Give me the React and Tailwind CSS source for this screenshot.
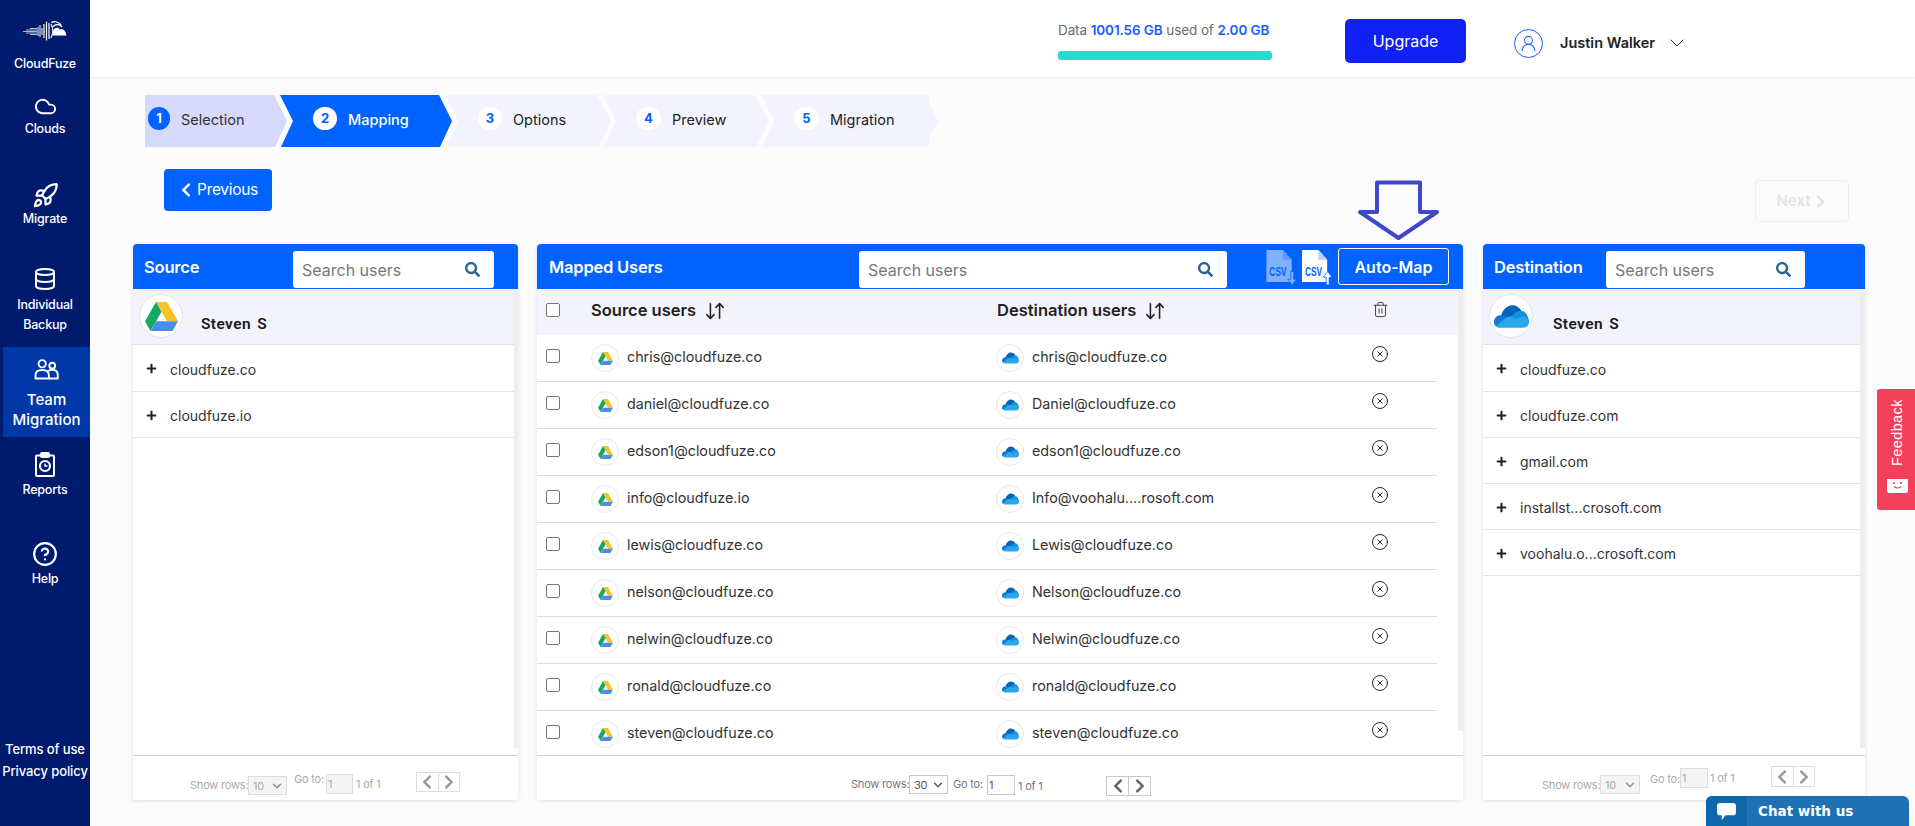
import React from "react";
import { FaSearch, FaPlus, FaChevronLeft, FaChevronRight, FaChevronDown } from "react-icons/fa";
import { Cloud, Rocket, Database, CircleHelp, ArrowDownUp, Trash2, CircleX, ChevronDown, UserRound } from "lucide-react";

function Drive({ className }) {
  return (
    <svg viewBox="0 0 24 21" className={className}>
      <path d="M8 0H16L24 14H16Z" fill="#F7C325" />
      <path d="M8 0L12 7L4 21L0 14Z" fill="#16A765" />
      <path d="M4.2 21L8 14H24L20 21Z" fill="#4C8BF0" />
    </svg>
  );
}

function OneDrive({ className }) {
  return (
    <svg viewBox="0 0 34 22" className={className}>
      <path d="M7 10C8.5 4 13 0 18 0C21.5 0 24.5 1.8 26.5 5.5L20 15Z" fill="#0364B8" />
      <path d="M7 9.5C3 9.5 0 12.5 0 16.5C0 18 .6 19.5 1.8 20.5L17 14Z" fill="#0F78D4" />
      <path d="M26.5 5.5C23 5.5 20.5 7 18.5 9.5L11 14L27 20L34 16C33.5 10 30.5 6 26.5 5.5Z" fill="#1490DF" />
      <path d="M6 22H28C31.5 22 34 19.5 34 16.5C34 13.5 31 11 28 11C25.5 11 23.5 12 21.5 13.5L17 11.5C14.5 10.5 12.5 11.5 10.5 13L1.8 20.5C3 21.5 4.5 22 6 22Z" fill="#28A8EA" />
    </svg>
  );
}

function Logo() {
  return (
    <svg viewBox="0 0 44 20" className="w-[44px] h-[20px]" fill="none" stroke="white">
      <path d="M0 10.5H14M3 9H14M3 12H14M7 7.5H14M7 13.5H14" strokeWidth=".7" />
      <path d="M15 6V15M17 4V16M19 7V14" strokeWidth="1" />
      <path d="M21 3V17M23.5 0.5V19.5M26 2V18" strokeWidth="1.2" />
      <path d="M28 3C30 7 30 13 28 17" strokeWidth="1.2" />
      <path d="M28.5 1.5C32 0 36 1 38 4M29.5 6C33 2.5 37 3 39 6" strokeWidth="1.4" />
      <path d="M30 14.5V10C31 7 35 5.5 37 8.5C40 7.5 42.5 9 43.5 14.5Z" fill="white" stroke="none" />
    </svg>
  );
}

function Team() {
  return (
    <svg viewBox="0 0 26 22" className="w-[25px] h-[21px]" fill="none" stroke="white" strokeWidth="2">
      <circle cx="8.5" cy="5" r="3.8" />
      <circle cx="19" cy="7" r="3" />
      <path d="M1.5 20.5V17C1.5 13.5 4 11.5 8.5 11.5C13 11.5 15.5 13.5 15.5 17V20.5Z" strokeLinejoin="round" />
      <path d="M15 12.5C16 11.5 17.5 11.2 19 11.2C22.5 11.2 24.8 13 24.8 16.5V20.5H15.5" strokeLinejoin="round" />
    </svg>
  );
}

function Report() {
  return (
    <svg viewBox="0 0 20 25" className="w-[20px] h-[25px]" fill="none" stroke="white" strokeWidth="2">
      <rect x="1" y="3.5" width="18" height="20.5" rx="1" />
      <rect x="6" y="1" width="8" height="4" rx="1" fill="white" />
      <circle cx="10" cy="14" r="5" strokeWidth="2.2" />
      <path d="M10 11.5V14H12.5" strokeWidth="1.4" />
    </svg>
  );
}

function Csv({ up }) {
  return (
    <svg viewBox="0 0 33 37" className={up ? "w-[32px] h-[36px]" : "w-[33px] h-[36px] opacity-50"}>
      <path d="M1 0H18L27 10V33H1Z" fill="white" />
      <path d="M18 0V10H27" fill="#b8cfff" />
      <text transform="translate(4 27) scale(0.82 1.3)" fontSize="10.5" fontWeight="700" fill="#0062FF" fontFamily="Liberation Sans, sans-serif">CSV</text>
      {up ? (
        <path d="M26 36V28H23L27.5 22L32 28H29V36Z" fill="white" stroke="#0062FF" strokeWidth=".8" />
      ) : (
        <path d="M26 22V30H23L27.5 36L32 30H29V22Z" fill="white" stroke="#0062FF" strokeWidth=".8" />
      )}
    </svg>
  );
}

function SideItem({ box, icon, labels, labelBox, gap }) {
  return (
    <div className={"flex flex-col items-center text-white " + box}>
      {icon}
      <div className={"flex flex-col items-center " + gap}>
        {labels.map((l) => (
          <div key={l} className={labelBox}>{l}</div>
        ))}
      </div>
    </div>
  );
}

function Sidebar() {
  const lbl = "text-[12.5px] leading-[20px] font-medium tracking-[-0.2px] whitespace-nowrap";
  return (
    <aside className="w-[90px] shrink-0 h-full bg-[#001A6E] flex flex-col">
      <SideItem box="h-[77px] pt-[21px]" icon={<Logo />} labels={["CloudFuze"]} labelBox={lbl} gap="mt-[13px]" />
      <SideItem box="h-[90px] pt-[18px]" icon={<Cloud size={27} strokeWidth={2} className="h-[23px]" />} labels={["Clouds"]} labelBox={lbl} gap="mt-[1px]" />
      <SideItem box="h-[90px] pt-[15px]" icon={<Rocket size={27} strokeWidth={2} />} labels={["Migrate"]} labelBox={lbl} gap="mt-[0px]" />
      <SideItem box="h-[90px] pt-[10px]" icon={<Database size={24} strokeWidth={2} />} labels={["Individual", "Backup"]} labelBox={lbl} gap="mt-[4px]" />
      <SideItem box="h-[90px] pt-[12px] ml-[3px] bg-[#0038A8]" icon={<Team />} labels={["Team", "Migration"]} labelBox="text-[15px] leading-[20px] font-medium whitespace-nowrap" gap="mt-[10px]" />
      <SideItem box="h-[90px] pt-[15px]" icon={<Report />} labels={["Reports"]} labelBox={lbl} gap="mt-[3px]" />
      <SideItem box="h-[90px] pt-[14px]" icon={<CircleHelp size={26} strokeWidth={2} />} labels={["Help"]} labelBox={lbl} gap="mt-[2px]" />
      <div className="mt-[121px] flex flex-col items-center text-white text-[13px] leading-[22px] tracking-[-0.1px] font-medium whitespace-nowrap">
        <div>Terms of use</div>
        <div>Privacy policy</div>
      </div>
    </aside>
  );
}

function Header() {
  return (
    <header className="h-[77px] bg-white shadow-[0_1px_3px_rgba(0,0,0,0.08)] flex items-start justify-end pr-[226px] shrink-0 relative">
      <div className="w-[214px] mt-[21px]">
        <div className="text-[13.5px] leading-[18px] tracking-[-0.1px] text-[#6b6b6b] whitespace-nowrap">
          Data <span className="text-[#1A5CFF] font-semibold">1001.56 GB</span> used of <span className="text-[#1A5CFF] font-semibold">2.00 GB</span>
        </div>
        <div className="h-[9px] mt-[12px] rounded-[3px] bg-[#22DDD0]" />
      </div>
      <button className="ml-[73px] mt-[19px] w-[121px] h-[44px] rounded-[5px] bg-[#1320F5] text-white text-[16px]">Upgrade</button>
      <div className="ml-[48px] mt-[29px] w-[29px] h-[29px] rounded-full border border-[#1A5CFF] flex items-center justify-center">
        <UserRound size={19} strokeWidth={1.3} className="text-[#1A5CFF]" />
      </div>
      <div className="ml-[17px] mt-[33px] w-[110px] text-[14.5px] leading-[20px] font-semibold text-[#222] whitespace-nowrap">Justin Walker</div>
      <ChevronDown size={24} strokeWidth={1} className="mt-[31px] text-[#333] -ml-[5px] w-[24px]" />
    </header>
  );
}

const steps = [
  { n: 1, t: "Selection", box: "w-[142px] bg-[#D6D9FB] text-[#333] pl-[3px] [clip-path:polygon(0_0,129px_0,142px_50%,130px_100%,0_100%)]", c: "bg-[#0062FF] text-white w-[22px]" },
  { n: 2, t: "Mapping", box: "w-[172px] -ml-[7px] bg-[#0062FF] text-white font-medium pl-[33px] [clip-path:polygon(0_0,159px_0,172px_50%,160px_100%,1px_100%,13px_50%)]", c: "bg-white text-[#0062FF] w-[24px]" },
  { n: 3, t: "Options", box: "w-[166px] -ml-[7px] bg-[#F2F3FE] text-[#222] pl-[33px] [clip-path:polygon(0_0,152px_0,166px_50%,153px_100%,1px_100%,13px_50%)]", c: "bg-white text-[#0062FF] w-[24px]" },
  { n: 4, t: "Preview", box: "w-[166px] -ml-[8px] bg-[#F2F3FE] text-[#222] pl-[33px] [clip-path:polygon(0_0,152px_0,166px_50%,153px_100%,1px_100%,13px_50%)]", c: "bg-white text-[#0062FF] w-[25px]" },
  { n: 5, t: "Migration", box: "w-[177px] -ml-[8px] bg-[#F2F3FE] text-[#222] pl-[33px] [clip-path:polygon(0_0,168px_0,168px_15%,177px_50%,168px_85%,168px_100%,1px_100%,13px_50%)]", c: "bg-white text-[#0062FF] w-[25px]" },
];

function Stepper() {
  return (
    <div className="flex ml-[55px] mt-[18px] h-[52px]">
      {steps.map((s) => (
        <div key={s.n} className={"h-[52px] flex items-center text-[14.5px] whitespace-nowrap " + s.box}>
          <span className={"h-[23px] -mt-[5px] rounded-full flex items-center justify-center text-[13px] font-bold " + s.c}>{s.n}</span>
          <span className="-mt-[3px] ml-[11px]">{s.t}</span>
        </div>
      ))}
    </div>
  );
}

function Search({ box }) {
  return (
    <div className={"h-[37px] mt-[7px] bg-white rounded-[3px] flex items-center justify-between pl-[9px] pr-[14px] shrink-0 " + box}>
      <span className="text-[16px] leading-[24px] text-[#777]">Search users</span>
      <FaSearch size={15} className="text-[#2A6293]" />
    </div>
  );
}

function PanelHead({ children }) {
  return <div className="h-[45px] bg-[#0062FF] rounded-t-[4px] flex items-start shrink-0">{children}</div>;
}

function Title({ box, children }) {
  return <div className={"text-white text-[16.5px] font-semibold leading-[22px] mt-[12px] shrink-0 whitespace-nowrap tracking-[-0.2px] " + box}>{children}</div>;
}

function Account({ logo, box }) {
  return (
    <div className="h-[56px] bg-[#F2F3FD] border-b border-[#e3e3e3] flex items-start pl-[6px]">
      <div className="w-[44px] h-[44px] mt-[5px] rounded-full bg-white border border-[#e4e4e4] flex items-center justify-center">{logo}</div>
      <div className={"mt-[24px] font-['Roboto',sans-serif] text-[15.5px] leading-[22px] font-semibold text-[#1a1a1a] tracking-[0.4px] [word-spacing:2px] " + box}>Steven S</div>
    </div>
  );
}

function Domain({ t }) {
  return (
    <div className="h-[46px] [&:nth-child(2)]:h-[47px] border-b border-[#e6e6e6] flex items-center pl-[13px] text-[14px] text-[#333]">
      <FaPlus size={11} className="text-[#222] mr-[13px] mt-[1px]" />
      <span className="mt-[2px]">{t}</span>
    </div>
  );
}

function Pager({ wrap, show, sel, go, inp, of, btn, val, selCls, inpCls, txt, chev }) {
  const line = val === "30" ? "border-[#c8c8c8]" : "border-[#dddddd]";
  return (
    <div className={"h-[45px] border-t border-[#d0d0d0] bg-white flex items-start whitespace-nowrap text-[11px] leading-[16px] tracking-[-0.2px] shrink-0 " + wrap + " " + txt}>
      <div className={show}>Show rows:</div>
      <div className={"border flex items-center justify-between pl-[4px] pr-[4px] " + sel + " " + selCls}>
        <span>{val}</span>
        <FaChevronDown size={10} className={chev} />
      </div>
      <div className={go}>Go to:</div>
      <div className={"border flex items-center pl-[1px] " + inp + " " + inpCls}>1</div>
      <div className={of}>1 of 1</div>
      <div className={"border flex " + btn + " " + line}>
        <div className={"flex-1 flex items-center justify-center border-r " + line}><FaChevronLeft size={16} className={chev} /></div>
        <div className="flex-1 flex items-center justify-center"><FaChevronRight size={16} className={chev} /></div>
      </div>
    </div>
  );
}

const users = [
  ["chris@cloudfuze.co", "chris@cloudfuze.co"],
  ["daniel@cloudfuze.co", "Daniel@cloudfuze.co"],
  ["edson1@cloudfuze.co", "edson1@cloudfuze.co"],
  ["info@cloudfuze.io", "Info@voohalu....rosoft.com"],
  ["lewis@cloudfuze.co", "Lewis@cloudfuze.co"],
  ["nelson@cloudfuze.co", "Nelson@cloudfuze.co"],
  ["nelwin@cloudfuze.co", "Nelwin@cloudfuze.co"],
  ["ronald@cloudfuze.co", "ronald@cloudfuze.co"],
  ["steven@cloudfuze.co", "steven@cloudfuze.co"],
];

function Check() {
  return <span className="block w-[14px] h-[14px] rounded-[2px] border border-[#767676] bg-white shrink-0" />;
}

function Mini({ children }) {
  return <span className="w-[28px] h-[28px] rounded-full border border-[#e8e8e8] bg-white flex items-center justify-center shrink-0">{children}</span>;
}

function SourcePanel() {
  return (
    <section className="w-[385px] h-[556px] bg-white shadow-[0_1px_4px_rgba(0,0,0,0.12)] flex flex-col shrink-0">
      <PanelHead>
        <Title box="w-[149px] ml-[11px]">Source</Title>
        <Search box="w-[201px]" />
      </PanelHead>
      <div className="flex-1 flex min-h-0">
        <div className="flex-1">
          <Account logo={<Drive className="w-[33px] h-[29px]" />} box="ml-[18px]" />
          <Domain t="cloudfuze.co" />
          <Domain t="cloudfuze.io" />
        </div>
        <div className="w-[4px] mb-[7px] bg-[#eeeeee]" />
      </div>
      <Pager wrap="pl-[57px]" txt="text-[#aaaaaa]" val="10" chev="text-[#999999]"
        selCls="bg-[#f4f4f4] border-[#dddddd]" inpCls="bg-[#f4f4f4] border-[#dddddd]"
        show="w-[58px] mt-[21px]" sel="w-[39px] h-[19px] mt-[20px]" go="w-[32px] ml-[7px] mt-[15px]"
        inp="w-[27px] h-[20px] mt-[18px]" of="w-[23px] ml-[3px] mt-[20px]" btn="w-[44px] h-[20px] ml-[37px] mt-[16px]" />
    </section>
  );
}

function MiddlePanel() {
  return (
    <section className="w-[926px] h-[556px] bg-white shadow-[0_1px_4px_rgba(0,0,0,0.12)] flex flex-col shrink-0">
      <PanelHead>
        <Title box="w-[310px] ml-[12px]">Mapped Users</Title>
        <Search box="w-[368px]" />
        <div className="ml-[38px] mt-[6px] flex gap-[3px] shrink-0"><Csv /><Csv up /></div>
        <button className="ml-[5px] mt-[4px] w-[111px] h-[37px] border border-white rounded-[3px] text-white text-[16px] font-semibold">Auto-Map</button>
      </PanelHead>
      <div className="flex-1 flex min-h-0">
        <div className="w-[921px] overflow-hidden">
          <div className="h-[46px] bg-[#F2F3FD] flex items-center text-[16.5px] font-semibold text-[#222]">
            <div className="w-[54px] pl-[9px] -mt-[4px]"><Check /></div>
            <div className="w-[406px] flex items-center -mt-[3px]">Source users<ArrowDownUp size={22} strokeWidth={1.7} className="ml-[8px] mt-[1px]" /></div>
            <div className="w-[375px] flex items-center -mt-[3px]">Destination users<ArrowDownUp size={22} strokeWidth={1.7} className="ml-[8px] mt-[1px]" /></div>
            <Trash2 size={17} strokeWidth={1.4} className="text-[#444] -mt-[6px]" />
          </div>
          {users.map(([a, b]) => (
            <div key={a} className="h-[47px] w-[900px] border-b border-[#dcdcdc] flex items-center text-[14.3px] text-[#333]">
              <div className="w-[54px] pl-[9px] -mt-[4px]"><Check /></div>
              <div className="w-[405px] flex items-center gap-[8px]"><Mini><Drive className="w-[15px] h-[13px]" /></Mini><span className="-mt-[2px]">{a}</span></div>
              <div className="w-[376px] flex items-center gap-[8px]"><Mini><OneDrive className="w-[17px] h-[12px]" /></Mini><span className="-mt-[2px]">{b}</span></div>
              <CircleX size={18} strokeWidth={1.3} className="text-[#222] -mt-[8px] -ml-[1px]" />
            </div>
          ))}
        </div>
        <div className="w-[5px] mb-[24px] bg-[#eeeeee]" />
      </div>
      <Pager wrap="pl-[314px]" txt="text-[#777777]" val="30" chev="text-[#666666]"
        selCls="bg-white border-[#c8c8c8] text-[#555]" inpCls="bg-white border-[#c8c8c8] text-[#555]"
        show="w-[58px] mt-[20px]" sel="w-[39px] h-[19px] mt-[19px]" go="w-[34px] ml-[5px] mt-[20px]"
        inp="w-[28px] h-[20px] mt-[19px]" of="w-[23px] ml-[3px] mt-[22px]" btn="w-[45px] h-[20px] ml-[65px] mt-[20px]" />
    </section>
  );
}

function DestPanel() {
  return (
    <section className="w-[382px] h-[556px] bg-white shadow-[0_1px_4px_rgba(0,0,0,0.12)] flex flex-col shrink-0">
      <PanelHead>
        <Title box="w-[112px] ml-[11px]">Destination</Title>
        <Search box="w-[199px]" />
      </PanelHead>
      <div className="flex-1 flex min-h-0">
        <div className="flex-1">
          <Account logo={<OneDrive className="w-[35px] h-[23px]" />} box="ml-[20px]" />
          {["cloudfuze.co", "cloudfuze.com", "gmail.com", "installst...crosoft.com", "voohalu.o...crosoft.com"].map((t) => (
            <Domain key={t} t={t} />
          ))}
        </div>
        <div className="w-[5px] mb-[7px] bg-[#eeeeee]" />
      </div>
      <Pager wrap="pl-[59px]" txt="text-[#aaaaaa]" val="10" chev="text-[#999999]"
        selCls="bg-[#f4f4f4] border-[#dddddd]" inpCls="bg-[#f4f4f4] border-[#dddddd]"
        show="w-[58px] mt-[21px]" sel="w-[40px] h-[19px] mt-[19px]" go="w-[30px] ml-[10px] mt-[15px]"
        inp="w-[28px] h-[20px] mt-[12px]" of="w-[23px] ml-[2px] mt-[14px]" btn="w-[44px] h-[21px] ml-[38px] mt-[10px]" />
    </section>
  );
}

export default function App() {
  return (
    <div className="relative w-[1915px] h-[826px] overflow-hidden flex bg-[#FCFCFC] [font-family:Inter,sans-serif]">
      <Sidebar />
      <main className="flex-1 flex flex-col min-w-0">
        <Header />
        <Stepper />
        <div className="h-[97px] flex items-start justify-between pl-[74px] pr-[66px] shrink-0">
          <button className="mt-[22px] w-[108px] h-[42px] rounded-[4px] bg-[#0062FF] text-white text-[15.5px] flex items-center justify-center gap-[3px] tracking-[-0.3px]">
            <FaChevronLeft size={16} />Previous
          </button>
          <button className="mt-[33px] w-[94px] h-[42px] rounded-[4px] bg-[#FCFCFC] border border-[#f0f0f0] text-[#e4e4e4] text-[15px] font-semibold flex items-center justify-center gap-[2px]">
            Next<FaChevronRight size={15} />
          </button>
        </div>
        <div className="flex ml-[43px] gap-[19px]">
          <SourcePanel />
          <MiddlePanel />
          <div className="ml-px"><DestPanel /></div>
        </div>
      </main>

      <svg viewBox="0 0 83 61" className="absolute left-[1357px] top-[180px] w-[83px] h-[61px]" fill="none" stroke="#3F48CC" strokeWidth="4" strokeLinejoin="round">
        <path d="M20 2.5H63V32H80L41.5 58L3 32H20Z" />
      </svg>

      <div className="absolute right-0 top-[389px] w-[38px] h-[121px] bg-[#F4405A] rounded-l-[3px] flex flex-col items-center text-white [font-family:'Liberation_Sans',sans-serif]">
        <div className="[writing-mode:vertical-rl] rotate-180 text-[14.5px] tracking-[0.4px] mt-[12px] ml-[3px] h-[64px] flex items-center justify-center">Feedback</div>
        <svg viewBox="0 0 24 17" className="w-[24px] h-[17px] mt-[11px]">
          <path d="M0 0L3 3H24V15Q24 17 22 17H5Q3 17 3 15V3Z" fill="white" />
          <circle cx="10" cy="7" r="1.1" fill="#F4405A" />
          <circle cx="17" cy="7" r="1.1" fill="#F4405A" />
          <path d="M10 10.5Q13.5 13.5 17 10.5" stroke="#F4405A" strokeWidth="1.2" fill="none" />
        </svg>
      </div>

      <div className="absolute left-[1706px] top-[796px] w-[203px] h-[30px] rounded-t-[6px] overflow-hidden flex bg-[#1F71B6] text-white [font-family:'DejaVu_Sans',sans-serif]">
        <div className="w-[41px] bg-[#0E67AB] flex items-center justify-center">
          <svg viewBox="0 0 20 18" className="w-[19px] h-[17px]">
            <path d="M3 0H17Q20 0 20 3V10Q20 13 17 13H9L5 18V13H3Q0 13 0 10V3Q0 0 3 0Z" fill="white" />
          </svg>
        </div>
        <div className="ml-[11px] text-[13.5px] font-bold leading-[30px]">Chat with us</div>
      </div>
    </div>
  );
}
